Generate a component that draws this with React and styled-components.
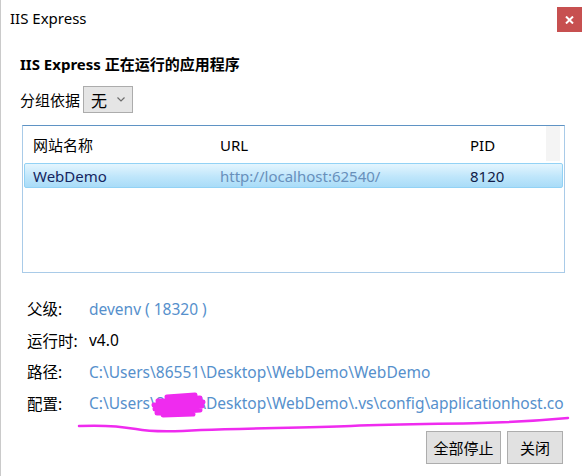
import React from 'react'
import styled, { createGlobalStyle } from 'styled-components'

const GlobalStyle = createGlobalStyle`
    body {
        margin: 0;
        background: #ffffff;
        font-family: "Noto Sans", "Noto Sans CJK SC", sans-serif;
        color: #000000;
    }
`;

const Window = styled.div`
    position: relative;
    width: 583px;
    height: 476px;
    box-sizing: border-box;
    border-left: 1px solid #cacaca;
    background: #ffffff;
    overflow: hidden;
`;

const TitleBar = styled.div`
    display: flex;
    justify-content: space-between;
    align-items: flex-start;
    height: 40px;
    padding-left: 9px;
`;

const Title = styled.span`
    font-size: 15px;
    line-height: 36px;
`;

const CloseButton = styled.div`
    display: flex;
    align-items: center;
    justify-content: center;
    width: 25px;
    height: 25px;
    margin-top: 7px;
    margin-right: 1px;
    background: #c75050;
`;

const Content = styled.div`
    padding: 0 19px 0 19px;
`;

const Heading = styled.h1`
    margin: 14px 0 0 0;
    font-size: 15px;
    font-weight: bold;
    line-height: 20px;
`;

const GroupRow = styled.div`
    display: flex;
    align-items: center;
    height: 27px;
    margin-top: 12px;
    font-size: 15px;
`;

const GroupLabel = styled.span`
    margin-right: 3px;
`;

const Select = styled.div`
    display: flex;
    align-items: center;
    justify-content: space-between;
    box-sizing: border-box;
    width: 50px;
    height: 27px;
    padding: 0 7px 0 7px;
    border: 1px solid #acacac;
    background: #e5e5e5;
    font-size: 16px;
`;

const ListBox = styled.div`
    box-sizing: border-box;
    width: 543px;
    height: 148px;
    margin: 12px 0 0 2px;
    border: 1px solid #a9cbe8;
    border-top-color: #5f93c4;
    font-size: 15px;
`;

const Columns = styled.div`
    display: grid;
    grid-template-columns: 187px 250px 1fr 14px;
    align-items: center;
`;

const HeaderRow = styled(Columns)`
    height: 37px;
    padding: 0 4px 0 10px;
`;

const HeaderFill = styled.div`
    align-self: start;
    height: 35px;
    background: #f4f4f4;
`;

const SelectedRow = styled(Columns)`
    box-sizing: border-box;
    height: 25px;
    margin: 0 1px;
    padding-left: 8px;
    border: 1px solid #92d2f5;
    border-radius: 2px;
    background: linear-gradient(#e4f5fe, #bfe6fb 55%, #a9dcf8);
    color: #15255f;
`;

const Cell = styled.span`
    line-height: 22px;
    color: ${p => p.$color || 'inherit'};
`;

const InfoGrid = styled.div`
    display: grid;
    grid-template-columns: 62px 1fr;
    grid-auto-rows: 31.5px;
    align-items: center;
    margin-top: 20px;
    padding-left: 7px;
    font-size: 15.5px;
`;

const InfoLabel = styled.span`
    white-space: nowrap;
`;

const InfoValue = styled.span`
    white-space: nowrap;
    overflow: hidden;
    color: ${p => (p.$link ? '#5690cc' : '#000000')};
`;

const ButtonRow = styled.div`
    display: flex;
    justify-content: flex-end;
    gap: 6px;
    margin: 12px 1px 0 0;
`;

const Button = styled.div`
    display: flex;
    align-items: center;
    justify-content: center;
    box-sizing: border-box;
    width: ${p => p.$width}px;
    height: 33px;
    border: 1px solid #adadad;
    background: #e1e1e1;
    font-size: 15px;
`;

const Markup = styled.svg`
    position: absolute;
    left: 0;
    top: 0;
    pointer-events: none;
`;

const rows = [
    { label: '父级:', value: 'devenv ( 18320 )', link: true },
    { label: '运行时:', value: 'v4.0' },
    { label: '路径:', value: 'C:\\Users\\86551\\Desktop\\WebDemo\\WebDemo', link: true },
    { label: '配置:', value: 'C:\\Users\\86551\\Desktop\\WebDemo\\.vs\\config\\applicationhost.config', link: true },
];

export default function App() {
    return (
        <Window>
            <GlobalStyle />
            <TitleBar>
                <Title>IIS Express</Title>
                <CloseButton>
                    <svg width="9" height="8" viewBox="0 0 9 8">
                        <path d="M1 0.5 L8 7.5 M8 0.5 L1 7.5" stroke="#ffffff" strokeWidth="2" />
                    </svg>
                </CloseButton>
            </TitleBar>
            <Content>
                <Heading>IIS Express 正在运行的应用程序</Heading>
                <GroupRow>
                    <GroupLabel>分组依据</GroupLabel>
                    <Select>
                        无
                        <svg width="8" height="5" viewBox="0 0 8 5">
                            <path d="M0.5 0.5 L4 4 L7.5 0.5" fill="none" stroke="#6d6d6d" strokeWidth="1.2" />
                        </svg>
                    </Select>
                </GroupRow>
                <ListBox>
                    <HeaderRow>
                        <Cell>网站名称</Cell>
                        <Cell>URL</Cell>
                        <Cell>PID</Cell>
                        <HeaderFill />
                    </HeaderRow>
                    <SelectedRow>
                        <Cell>WebDemo</Cell>
                        <Cell $color="#6890bb">http://localhost:62540/</Cell>
                        <Cell $color="#101c48">8120</Cell>
                    </SelectedRow>
                </ListBox>
                <InfoGrid>
                    {rows.map(r => (
                        <React.Fragment key={r.label}>
                            <InfoLabel>{r.label}</InfoLabel>
                            <InfoValue $link={r.link}>{r.value}</InfoValue>
                        </React.Fragment>
                    ))}
                </InfoGrid>
                <ButtonRow>
                    <Button $width={75}>全部停止</Button>
                    <Button $width={56}>关闭</Button>
                </ButtonRow>
            </Content>
            <Markup width="583" height="476" viewBox="0 0 583 476">
                {/* scribble over the user folder name */}
                <path
                    d="M166 397 L194 395 M157 401 L199 398 M153 405 L202 402 M154 409 L201 406 M156 413 L199 410 M162 415 L192 414"
                    fill="none" stroke="#ef2bef" strokeWidth="5" strokeLinecap="round"
                />
                <path
                    d="M78 426 C100 425 118 426 135 429 C150 432 170 432 200 430 C250 428 300 428 350 426 C400 424 440 424 480 423 C520 422 545 420 567 418"
                    fill="none" stroke="#ef2bef" strokeWidth="2.5" strokeLinecap="round"
                />
            </Markup>
        </Window>
    )
}
